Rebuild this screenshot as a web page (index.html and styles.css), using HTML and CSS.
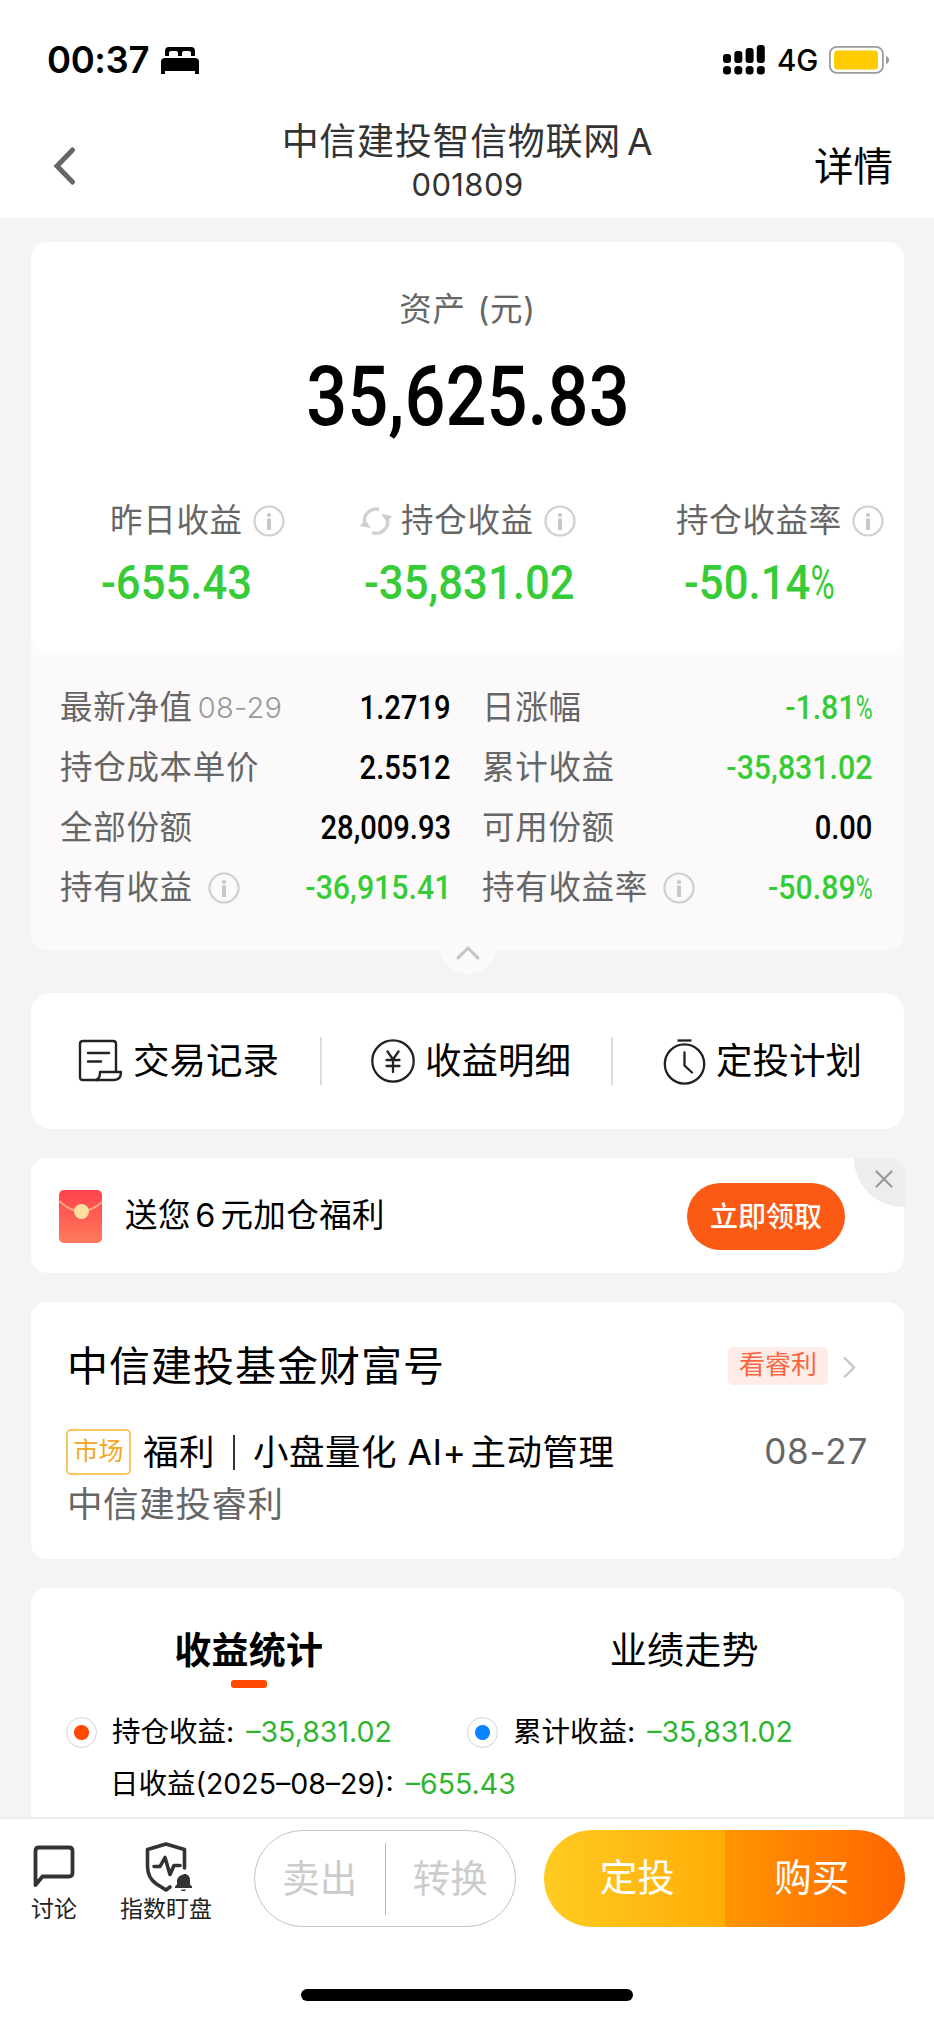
FILE: index.html
```html
<!DOCTYPE html>
<html lang="zh-CN">
<head>
    <meta charset="UTF-8">
    <meta name="viewport" content="width=device-width, initial-scale=1.0">
    <title>中信建投智信物联网A</title>
    <link rel="stylesheet" href="styles.css">
</head>
<body>
    <!-- shared icons -->
    <svg class="sprite" width="0" height="0">
        <symbol id="icon-info" viewBox="0 0 32 32">
            <circle cx="16" cy="16" r="14.5" fill="none" stroke="#cfcfcf" stroke-width="2.2"/>
            <circle cx="16" cy="10" r="2.1" fill="#c8c8c8"/>
            <rect x="14" y="13.5" width="4" height="11.5" fill="#c8c8c8"/>
        </symbol>
    </svg>

    <div class="status-bar">
        <span class="time">00:37</span>
        <svg class="bed" width="38" height="27" viewBox="0 0 38 27">
            <path d="M4 9V4q0-4 4-4h22q4 0 4 4v5h-4V6q0-2-2-2h-5q-2 0-2 2v3h-4V6q0-2-2-2h-5q-2 0-2 2v3z"/>
            <path d="M0 27V15q0-4 4-4h30q4 0 4 4v12h-4v-3H4v3z"/>
        </svg>
        <svg class="signal" width="42" height="30" viewBox="0 0 42 30">
            <rect x="0" y="9" width="8" height="9" rx="3"/>
            <rect x="11.3" y="6" width="8" height="12" rx="3"/>
            <rect x="22.6" y="3" width="8" height="15" rx="3"/>
            <rect x="33.8" y="0" width="8" height="18" rx="3"/>
            <rect x="0" y="21" width="8" height="8.5" rx="3.5"/>
            <rect x="11.3" y="21" width="8" height="8.5" rx="3.5"/>
            <rect x="22.6" y="21" width="8" height="8.5" rx="3.5"/>
            <rect x="33.8" y="21" width="8" height="8.5" rx="3.5"/>
        </svg>
        <span class="network">4G</span>
        <svg class="battery" width="61" height="28" viewBox="0 0 61 28">
            <rect x="0.9" y="0.9" width="53" height="26" rx="7" fill="none" stroke="#9b9b9b" stroke-width="1.8"/>
            <rect x="5" y="4.5" width="44" height="19" rx="3.5" fill="#ffcc00"/>
            <path d="M57 10q3 1 3 4t-3 4z" fill="#9b9b9b"/>
        </svg>
    </div>

    <header class="nav">
        <svg class="back" width="22" height="38" viewBox="0 0 22 38">
            <path d="M18.5 3L3 19l15.500 16" fill="none" stroke="#666" stroke-width="5" stroke-linecap="round"/>
        </svg>
        <div class="nav-title">
            <h1>中信建投智信物联网 A</h1>
            <p>001809</p>
        </div>
        <a class="nav-detail">详情</a>
    </header>

    <main>
        <section class="asset">
            <div class="asset-top">
                <p class="asset-label">资产 (元)</p>
                <p class="asset-total"><span class="din">35,625.83</span></p>
                <div class="profits">
                    <div class="profit profit-day">
                        <p class="profit-label">昨日收益<svg class="info"><use href="#icon-info"/></svg></p>
                        <p class="profit-value"><span class="din">-655.43</span></p>
                    </div>
                    <div class="profit profit-hold">
                        <p class="profit-label">
                            <svg class="refresh" width="32" height="28" viewBox="0 0 32 28">
                                <path d="M5 17a11.500 11.500 0 0 1 14-14.500M27 11a11.500 11.500 0 0 1-15 14.500" fill="none" stroke="#d2d2d2" stroke-width="3.4"/>
                                <path d="M0 19l5-6 6 8zM32 9l-5 6-6-8z" fill="#cdcdcd"/>
                            </svg>持仓收益<svg class="info"><use href="#icon-info"/></svg>
                        </p>
                        <p class="profit-value"><span class="din">-35,831.02</span></p>
                    </div>
                    <div class="profit profit-rate">
                        <p class="profit-label">持仓收益率<svg class="info"><use href="#icon-info"/></svg></p>
                        <p class="profit-value"><span class="din">-50.14<span class="pct">%</span></span></p>
                    </div>
                </div>
            </div>
            <div class="details">
                <div class="detail">最新净值<small>08-29</small><b class="din">1.2719</b></div>
                <div class="detail">日涨幅<b class="din green">-1.81<span class="pct">%</span></b></div>
                <div class="detail">持仓成本单价<b class="din">2.5512</b></div>
                <div class="detail">累计收益<b class="din green">-35,831.02</b></div>
                <div class="detail">全部份额<b class="din">28,009.93</b></div>
                <div class="detail">可用份额<b class="din">0.00</b></div>
                <div class="detail">持有收益<svg class="info"><use href="#icon-info"/></svg><b class="din green">-36,915.41</b></div>
                <div class="detail">持有收益率<svg class="info"><use href="#icon-info"/></svg><b class="din green">-50.89<span class="pct">%</span></b></div>
            </div>
            <div class="collapse">
                <svg width="24" height="15" viewBox="0 0 24 15">
                    <path d="M2 13L12 3l10 10" fill="none" stroke="#c4c4c4" stroke-width="3" stroke-linecap="round"/>
                </svg>
            </div>
        </section>

        <nav class="card shortcuts">
            <a class="shortcut">
                <svg width="44" height="46" viewBox="0 0 44 46" fill="none" stroke="#222" stroke-width="2.4" stroke-linejoin="round">
                    <path d="M19 42H4q-3 0-3-3V6q0-3 3-3h30q3 0 3 3v28"/>
                    <path d="M17 42q4-1 4-8h21q0 8-7 8z"/>
                    <path d="M9 15h21M9 23.500h13" stroke-linecap="round"/>
                </svg>
                <span>交易记录</span>
            </a>
            <a class="shortcut">
                <svg width="44" height="46" viewBox="0 0 44 46" fill="none" stroke="#222" stroke-width="2.3">
                    <circle cx="22" cy="23" r="20.700"/>
                    <path d="M16.500 13.500l5.500 8 5.500-8M22 21.500V34M15.500 22h13M15.500 28h13" stroke-linecap="round"/>
                </svg>
                <span>收益明细</span>
            </a>
            <a class="shortcut">
                <svg width="44" height="46" viewBox="0 0 44 46" fill="none" stroke="#222" stroke-width="2.3">
                    <circle cx="22.500" cy="26" r="19.700"/>
                    <path d="M15.500 2.500h14"/>
                    <path d="M22.500 14.500v13l7.500 7" stroke-linecap="round"/>
                </svg>
                <span>定投计划</span>
            </a>
        </nav>

        <section class="card gift">
            <svg width="43" height="53" viewBox="0 0 43 53">
                <defs>
                    <linearGradient id="envelope" x1="0" y1="0" x2="0" y2="1">
                        <stop offset="0" stop-color="#ff434c"/>
                        <stop offset="1" stop-color="#ff7a5c"/>
                    </linearGradient>
                </defs>
                <rect width="43" height="53" rx="5" fill="url(#envelope)"/>
                <path d="M0 11q21.500 20 43 1" fill="none" stroke="#ffa878" stroke-width="2"/>
                <circle cx="22.500" cy="21.500" r="7.500" fill="#fddf9f"/>
            </svg>
            <p>送您 6 元加仓福利</p>
            <button>立即领取</button>
            <div class="close">
                <svg width="18" height="18" viewBox="0 0 18 18">
                    <path d="M1.500 1.500l15 15M16.500 1.500l-15 15" stroke="#999" stroke-width="2.200" stroke-linecap="round"/>
                </svg>
            </div>
        </section>

        <section class="card wealth">
            <div class="wealth-head">
                <h2>中信建投基金财富号</h2>
                <span class="tag">看睿利</span>
                <svg width="14" height="23" viewBox="0 0 14 23">
                    <path d="M2 1.500l10 10-10 10" fill="none" stroke="#c8c8c8" stroke-width="2.400"/>
                </svg>
            </div>
            <div class="wealth-row">
                <span class="market">市场</span>
                <span class="wealth-text">福利<i></i>小盘量化 AI+<em>主动管理</em></span>
                <span class="wealth-date">08-27</span>
            </div>
            <p class="wealth-from">中信建投睿利</p>
        </section>

        <section class="card stats">
            <div class="tabs">
                <span class="tab active">收益统计</span>
                <span class="tab">业绩走势</span>
            </div>
            <div class="legend">
                <div class="legend-item"><span class="ring"></span>持仓收益:<span class="num">–35,831.02</span></div>
                <div class="legend-item"><span class="ring blue"></span>累计收益:<span class="num">–35,831.02</span></div>
            </div>
            <p class="day">日收益(2025–08–29):<span class="num">–655.43</span></p>
        </section>
    </main>

    <footer class="bottom">
        <div class="actions">
            <a class="tool">
                <svg width="42" height="50" viewBox="0 0 42 50">
                    <path d="M2.500 43V9q0-3.500 3.500-3.500h30q3.500 0 3.500 3.500v22q0 3.500-3.500 3.500H9.500z" fill="none" stroke="#333" stroke-width="3.800" stroke-linejoin="round"/>
                </svg>
                讨论
            </a>
            <a class="tool">
                <svg class="watch" width="48" height="50" viewBox="0 0 48 50" fill="none" stroke="#333" stroke-width="3.600" stroke-linejoin="round">
                    <path d="M39.500 26V7.500L21 2 2.500 7.500V24q0 12 9 18l9.500 6 4-3" stroke-linecap="round"/>
                    <path d="M9 24.500h6l5-9 5 17 4-9h6" stroke-linecap="round"/>
                    <path d="M30 46h17v-1.500l-2-2V38q0-4.500-3.500-5.500V32h-3v.5Q33 33.500 32 38v4.500l-2 2zM36.500 47.500h4v1.500h-4z" fill="#333" stroke="none"/>
                </svg>
                指数盯盘
            </a>
            <div class="outline-btns">
                <span>卖出</span>
                <span>转换</span>
            </div>
            <div class="fill-btns">
                <span class="plan">定投</span>
                <span class="buy">购买</span>
            </div>
        </div>
        <div class="home-bar"></div>
    </footer>
</body>
</html>
```
FILE: styles.css
```css
* {
    box-sizing: border-box;
}

body {
    margin: 0;
    height: 2020px;
    display: flex;
    flex-direction: column;
    overflow: hidden;
    background: #f4f4f4;
    color: #000;
    font-family: Inter, "Noto Sans CJK SC", sans-serif;
    line-height: 1.3;
}

h1, h2, p {
    margin: 0;
    font-weight: 400;
}

svg {
    display: block;
    flex-shrink: 0;
    overflow: visible;
}

.sprite {
    position: absolute;
}

/* narrow digits */
.din {
    display: inline-block;
    font-family: Roboto, sans-serif;
    font-weight: 500;
    transform: scaleX(0.91);
    transform-origin: left center;
}

.pct {
    display: inline-block;
    font-weight: 400;
    transform: scaleX(0.76);
    transform-origin: left center;
    margin-right: -0.18em;
}

.info {
    width: 32px;
    height: 32px;
}

/* status bar */
.status-bar {
    height: 110px;
    padding: 10px 44px 0 47px;
    display: flex;
    align-items: center;
    background: #fff;
}

.time {
    width: 114px;
    font-size: 36.500px;
    font-weight: 600;
    letter-spacing: -0.400px;
    line-height: 44px;
}

.signal {
    margin-left: auto;
}

.network {
    width: 42px;
    margin: 0 10px 0 12px;
    font-size: 29.500px;
    font-weight: 500;
    line-height: 36px;
}

/* top nav */
.nav {
    height: 108px;
    padding: 0 41px 0 54px;
    display: flex;
    align-items: center;
    justify-content: space-between;
    background: #fff;
}

.back {
    margin-top: 4px;
}

.nav-title {
    padding: 0 0 2px 45px;
    text-align: center;
    color: #333;
}

.nav-title h1 {
    font-size: 37px;
    letter-spacing: 0.700px;
    word-spacing: -5px;
    line-height: 44px;
}

.nav-title p {
    font-size: 31px;
    letter-spacing: 0.400px;
    line-height: 42px;
}

.nav-detail {
    margin-top: 6px;
    font-size: 39.500px;
    line-height: 50px;
}

main {
    flex: 1;
    min-height: 0;
    overflow: hidden;
    padding: 24px 30px 0 31px;
}

.card {
    background: #fff;
    border-radius: 16px;
}

/* asset card */
.asset {
    position: relative;
    height: 708px;
    background: #fbf9fa;
    border-radius: 16px;
}

.asset-top {
    height: 411px;
    padding-top: 46px;
    background: #fff;
    border-radius: 16px;
}

.asset-label {
    font-size: 32.500px;
    letter-spacing: 0.700px;
    word-spacing: 2px;
    line-height: 44px;
    text-align: center;
    color: #666;
}

.asset-total {
    font-size: 83px;
    line-height: 100px;
    margin-top: 13px;
    text-align: center;
}

.asset-total .din {
    transform: scaleX(0.87);
    transform-origin: center;
}

.profits {
    margin-top: 52px;
    display: grid;
    grid-template-columns: repeat(3, 1fr);
}

.profit-label {
    display: flex;
    align-items: center;
    white-space: nowrap;
    height: 44px;
    font-size: 32.500px;
    letter-spacing: 0.700px;
    color: #666;
}

.profit-label .info {
    margin-left: 10px;
}

.refresh {
    margin-right: 9px;
}

.profit-value {
    margin-top: 11px;
    font-size: 48px;
    line-height: 56px;
    color: #37cc37;
}

.profit-day {
    padding-left: 79px;
}

.profit-day .profit-value {
    margin-left: -9px;
}

.profit-hold {
    padding-left: 38px;
}

.profit-hold .profit-value {
    margin-left: 4px;
}

.profit-rate {
    padding-left: 63px;
}

.profit-rate .profit-value {
    margin-left: 8px;
}

.details {
    padding: 25px 32px 0 29px;
    display: grid;
    grid-template-columns: 391px 1fr;
    grid-auto-rows: 60px;
    column-gap: 31px;
}

.detail {
    display: flex;
    align-items: center;
    white-space: nowrap;
    font-size: 32.500px;
    letter-spacing: 0.700px;
    color: #666;
}

.detail small {
    margin-left: 5px;
    font-size: 29px;
    font-weight: 300;
    letter-spacing: 0.300px;
    color: #999;
}

.detail .info {
    margin-left: 15px;
}

.detail .din {
    margin-left: auto;
    font-size: 33.500px;
    letter-spacing: 0;
    color: #000;
    transform: scaleX(0.87);
    transform-origin: right center;
}

.detail .green {
    color: #37cc37;
    transform: scaleX(0.905);
}

.collapse {
    position: absolute;
    left: 408px;
    bottom: -24px;
    width: 58px;
    height: 58px;
    display: flex;
    align-items: center;
    justify-content: center;
    padding-top: 15px;
    border-radius: 50%;
    background: #fbf9fa;
}

/* shortcuts */
.shortcuts {
    height: 136px;
    margin-top: 43px;
    display: grid;
    grid-template-columns: repeat(3, 1fr);
    align-items: center;
    border-radius: 20px;
}

.shortcut {
    height: 48px;
    padding-left: 49px;
    display: flex;
    align-items: center;
    font-size: 36.500px;
}

.shortcut:first-child {
    padding-left: 48px;
}

.shortcut:not(:last-child) {
    border-right: 2px solid #ddd;
}

.shortcut span {
    margin: 2px 0 0 10px;
}

/* gift */
.gift {
    position: relative;
    height: 115px;
    margin-top: 29px;
    padding: 2px 59px 0 28px;
    display: flex;
    align-items: center;
}

.gift p {
    margin-left: 23px;
    font-size: 32.500px;
    letter-spacing: 0.400px;
    word-spacing: -5px;
}

.gift button {
    width: 158px;
    height: 67px;
    margin-left: auto;
    padding: 0;
    border: none;
    border-radius: 34px;
    background: #fb5a14;
    color: #fff;
    font-family: inherit;
    font-size: 28px;
    font-weight: 500;
    line-height: 40px;
}

.close {
    position: absolute;
    top: 0;
    right: -1px;
    width: 51px;
    height: 49px;
    padding: 12px 0 0 21px;
    border-radius: 0 16px 0 49px;
    background: #ededed;
}

/* wealth account */
.wealth {
    height: 257px;
    margin-top: 29px;
    padding: 38px 36px 0 35px;
}

.wealth-head {
    height: 54px;
    padding-right: 12px;
    display: flex;
    align-items: center;
}

.wealth-head h2 {
    margin-left: 1px;
    font-size: 41px;
    letter-spacing: 1px;
}

.tag {
    margin: -3px 14px 0 auto;
    width: 100px;
    height: 38px;
    border-radius: 5px;
    background: #fdece8;
    color: #fb6540;
    font-size: 26px;
    line-height: 36px;
    text-align: center;
}

.wealth-row {
    margin-top: 34px;
    height: 48px;
    display: flex;
    align-items: center;
}

.market {
    width: 65px;
    height: 46px;
    border: 2px solid #f8c565;
    border-radius: 5px;
    color: #f5a623;
    font-size: 25px;
    line-height: 41px;
    text-align: center;
}

.wealth-text {
    margin-left: 12px;
    display: flex;
    align-items: center;
    font-size: 35.500px;
    letter-spacing: 0.500px;
    line-height: 49px;
    white-space: pre;
}

.wealth-text i {
    width: 2px;
    height: 35px;
    margin: 0 18px;
    background: #333;
}

.wealth-text em {
    margin-left: 4px;
    font-style: normal;
}

.wealth-date {
    margin-left: auto;
    font-size: 35px;
    letter-spacing: 0.800px;
    color: #666;
}

.wealth-from {
    margin: 5px 0 0 1px;
    font-size: 35.500px;
    letter-spacing: 0.600px;
    line-height: 48px;
    color: #666;
}

/* stats */
.stats {
    height: 260px;
    margin-top: 29px;
    padding-top: 36px;
}

.tabs {
    display: grid;
    grid-template-columns: 1fr 1fr;
    padding-right: 2px;
}

.tab {
    height: 67px;
    font-size: 37px;
    letter-spacing: 0.300px;
    line-height: 53px;
    text-align: center;
}

.tab.active {
    font-weight: 700;
}

.tab.active::after {
    content: "";
    display: block;
    width: 36px;
    height: 8px;
    margin: 3px auto 0;
    border-radius: 3px;
    background: #fe4a00;
}

.legend {
    height: 52px;
    margin-top: 15px;
    padding-left: 35px;
    display: grid;
    grid-template-columns: 401px 1fr;
}

.legend-item,
.day {
    display: flex;
    align-items: center;
    font-size: 28.500px;
}

.ring {
    width: 31px;
    height: 31px;
    margin-right: 15px;
    border: 1.500px solid #d4d4d4;
    border-radius: 50%;
    background: radial-gradient(circle, #ff4800 7px, #fff 8px);
}

.ring.blue {
    background: radial-gradient(circle, #0a84ff 7px, #fff 8px);
}

.num {
    margin-left: 12px;
    color: #2fb42f;
}

.day {
    height: 52px;
    padding-left: 79px;
}

/* bottom bar */
.bottom {
    height: 203px;
    border-top: 2px solid #ededed;
    background: #fff;
}

.actions {
    padding: 11px 29px 0 31px;
    display: flex;
}

.tool {
    display: flex;
    flex-direction: column;
    align-items: center;
    padding-top: 12px;
    font-size: 23px;
    line-height: 34px;
    color: #222;
}

.tool + .tool {
    margin-left: 43px;
}

.watch {
    margin-left: 5px;
}

.outline-btns {
    width: 262px;
    height: 97px;
    margin-left: 42px;
    display: flex;
    align-items: center;
    border: 1px solid #c4c4c4;
    border-radius: 49px;
    color: #ccc;
}

.outline-btns span {
    flex: 1;
    height: 72px;
    font-size: 37.500px;
    line-height: 71px;
    text-align: center;
}

.outline-btns span + span {
    border-left: 1px solid #bbb;
}

.fill-btns {
    width: 361px;
    height: 97px;
    margin-left: auto;
    display: flex;
    overflow: hidden;
    border-radius: 49px;
    color: #fff;
}

.fill-btns span {
    flex: 1;
    font-size: 37.500px;
    line-height: 96px;
    text-align: center;
}

.plan {
    padding-left: 6px;
    background: linear-gradient(to right, #ffcb22, #ffad06);
}

.buy {
    padding-right: 6px;
    background: linear-gradient(to right, #ff9500, #ff6500);
}

.home-bar {
    width: 332px;
    height: 12px;
    margin: 62px auto 0;
    border-radius: 6px;
    background: #000;
}
```
